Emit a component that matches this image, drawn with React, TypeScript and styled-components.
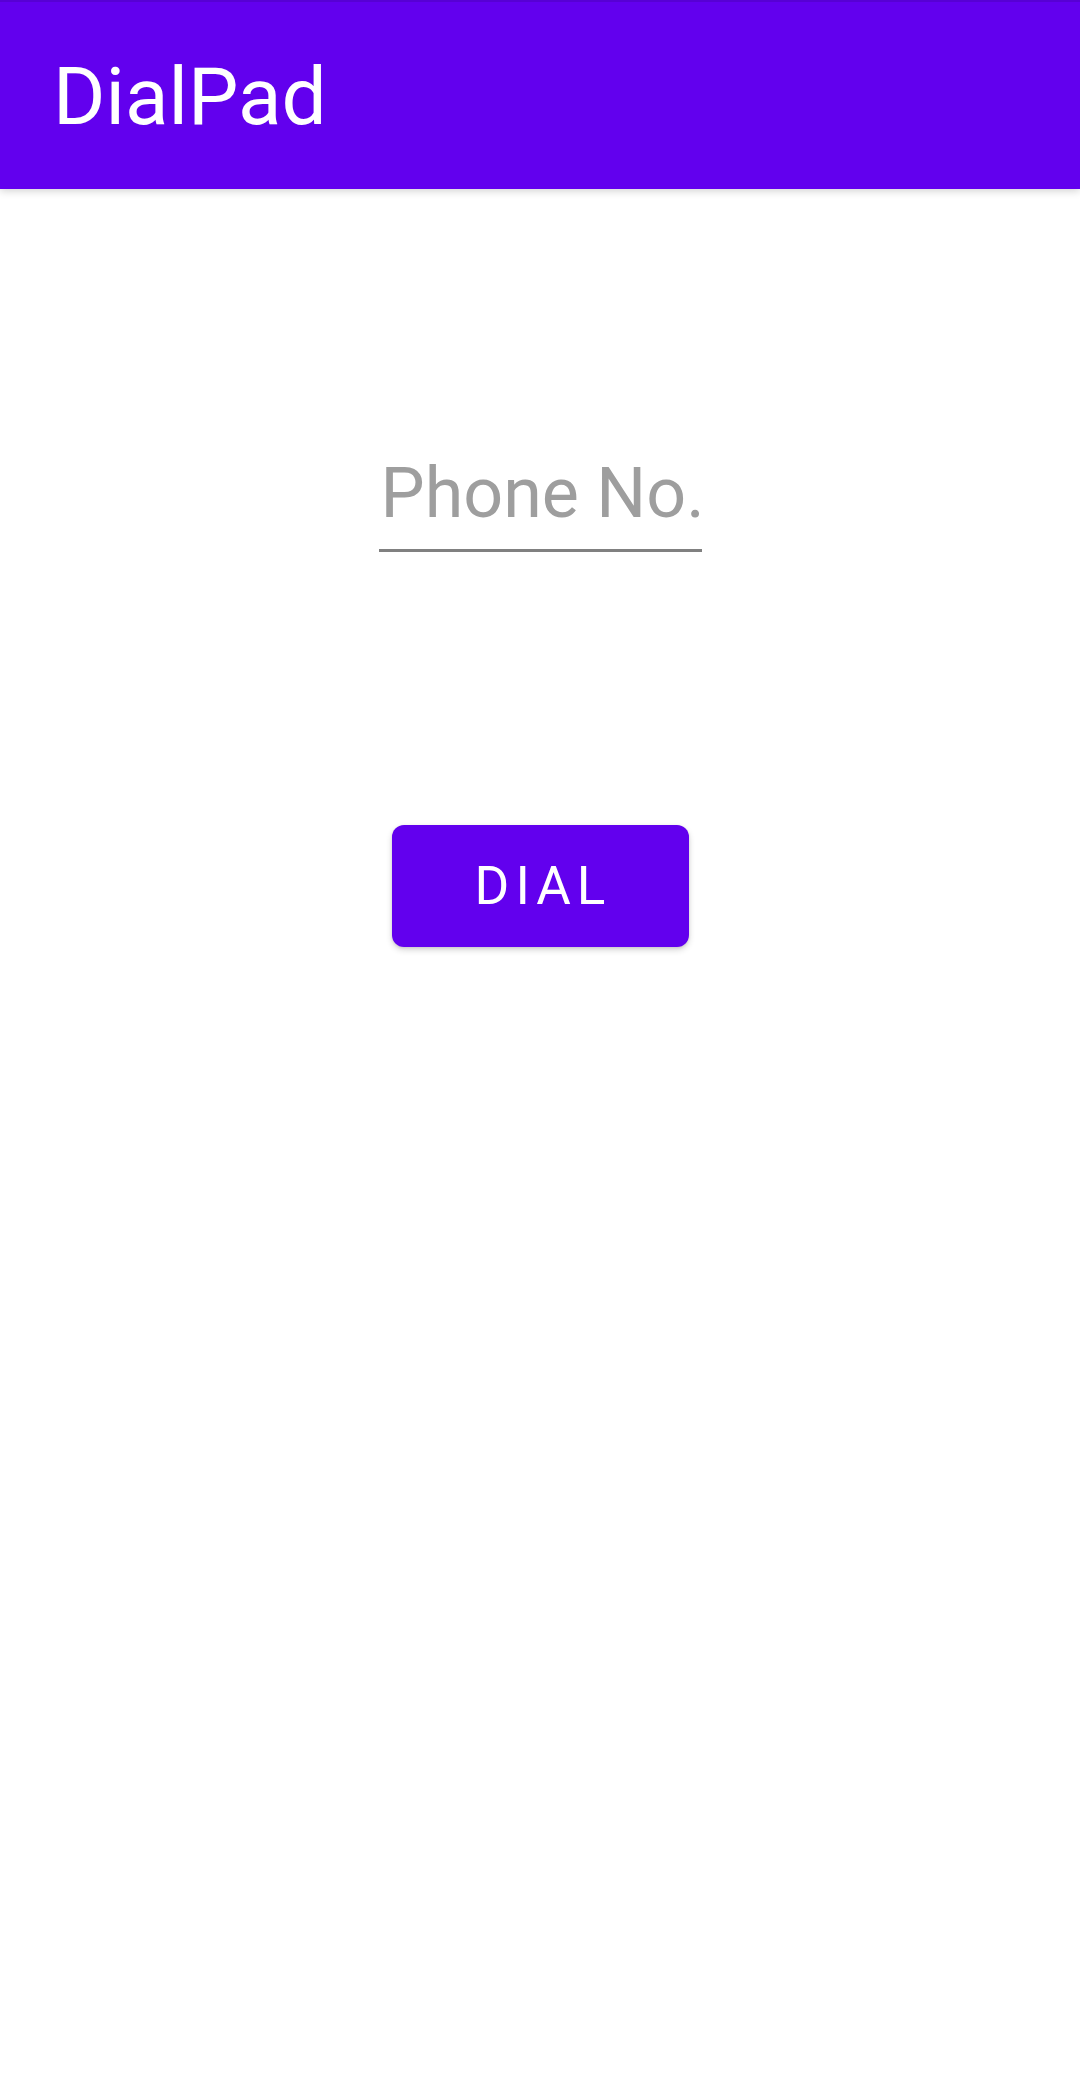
import React from 'react';
import styled, { createGlobalStyle } from 'styled-components';

const GlobalStyle = createGlobalStyle`
  html, body {
    margin: 0;
    padding: 0;
    background: #ffffff;
    font-family: Roboto, "Noto Sans", sans-serif;
  }
`;

// Layout

const Screen = styled.div`
  width: 1080px;
  min-height: 2090px;
  display: flex;
  flex-direction: column;
  background: #ffffff;
`;

const AppBar = styled.header`
  height: 187px;
  border-top: 2px solid #5700d4;
  background: #6200ee;
  display: flex;
  align-items: center;
  padding-left: 53px;
  box-shadow: 0 2px 8px rgba(0, 0, 0, 0.18);
  position: relative;
  z-index: 1;
`;

const Title = styled.h1`
  margin: 0;
  margin-top: 2px;
  font-family: Roboto, sans-serif;
  font-weight: 400;
  font-size: 80px;
  color: #ffffff;
`;

const Content = styled.main`
  display: flex;
  flex-direction: column;
  align-items: center;
  padding-top: 262px;
`;

const PhoneField = styled.div`
  width: 323px;
  border-bottom: 3px solid #808080;
  padding-bottom: 14px;
`;

const Placeholder = styled.div`
  font-family: Roboto, sans-serif;
  font-size: 70px;
  line-height: 84px;
  color: #9e9e9e;
  padding-left: 2px;
  white-space: nowrap;
`;

const DialButton = styled.button`
  margin-top: 273px;
  width: 297px;
  height: 122px;
  border: none;
  border-radius: 12px;
  background: #6200ee;
  color: #ffffff;
  font-family: Roboto, sans-serif;
  font-weight: 400;
  font-size: 53px;
  letter-spacing: 6px;
  padding: 0 0 0 6px;
  box-shadow: 0 3px 6px rgba(0, 0, 0, 0.16), 0 1px 3px rgba(0, 0, 0, 0.1);
  cursor: pointer;
`;

export default function App() {
  return (
    <Screen>
      <GlobalStyle />
      <AppBar>
        <Title>DialPad</Title>
      </AppBar>
      <Content>
        <PhoneField>
          <Placeholder>Phone No.</Placeholder>
        </PhoneField>
        <DialButton>DIAL</DialButton>
      </Content>
    </Screen>
  );
}
